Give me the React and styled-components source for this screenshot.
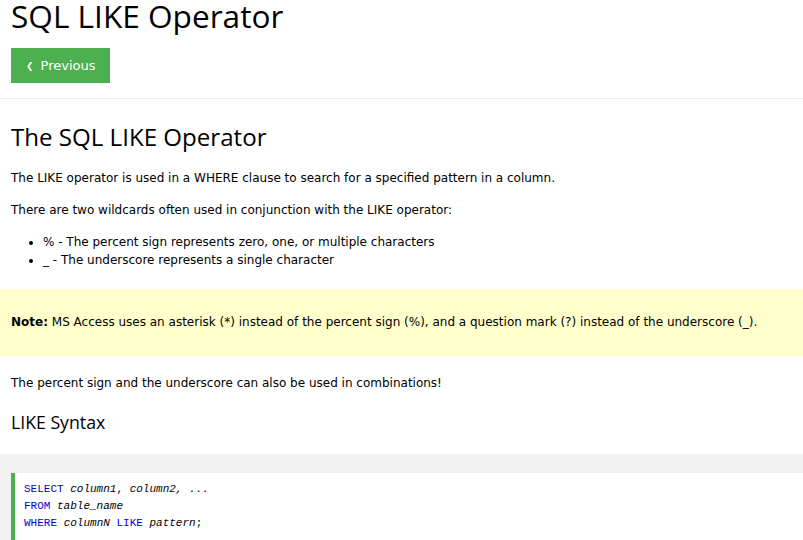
import styled, { createGlobalStyle } from "styled-components";

const GlobalStyle = createGlobalStyle`
  body {
    margin: 0;
    background: #fff;
    color: #000;
    font-family: Verdana, "DejaVu Sans", sans-serif;
    font-size: 12px;
    line-height: 18px;
  }
`;

const Page = styled.div`
  width: 803px;
  overflow: hidden;
`;

const Section = styled.div`
  padding: 0 11px;
`;

const Title = styled.h1`
  margin: 0;
  font-family: "Open Sans", "Noto Sans", sans-serif;
  font-weight: 400;
  font-size: 31.6px;
  line-height: 32px;
`;

const PrevButton = styled.a`
  display: inline-flex;
  align-items: center;
  gap: 7px;
  height: 35px;
  margin-top: 16px;
  padding: 0 14px 0 15px;
  background: #4caf50;
  color: #fff;
  text-decoration: none;
  font-size: 13px;
  cursor: pointer;
`;

const Arrow = styled.span`
  font-weight: bold;
  font-size: 9px;
`;

const Rule = styled.hr`
  margin: 15px 0 0;
  border: 0;
  border-top: 1px solid #eee;
`;

const Heading = styled.h2`
  margin: ${({ $small }) => ($small ? "18px 0 0" : "22px 0 0")};
  font-family: "Open Sans", "Noto Sans", sans-serif;
  font-weight: 400;
  font-size: ${({ $small }) => ($small ? "17.7px" : "24.1px")};
  line-height: ${({ $small }) => ($small ? "24px" : "32px")};
`;

const Para = styled.p`
  margin: ${({ $top }) => $top ?? "14px"} 0 0;
`;

const List = styled.ul`
  margin: 14px 0 0;
  padding-left: 32px;
`;

const Note = styled.div`
  margin-top: 20px;
  padding: 24px 11px 25px;
  background: #ffffcc;
`;

const Example = styled.div`
  margin-top: 20px;
  padding: 19px 0 0 11px;
  background: #f1f1f1;
`;

const CodeBox = styled.div`
  background: #fff;
  border-left: 4px solid #4caf50;
  padding: 8px 0 12px 9px;
  font-family: "Liberation Mono", "DejaVu Sans Mono", monospace;
  font-size: 11px;
  line-height: 17px;
  white-space: pre;
`;

const Keyword = styled.span`
  color: mediumblue;
`;

const Arg = styled.span`
  font-style: italic;
`;

export default function App() {
  return (
    <Page>
      <GlobalStyle />
      <Section>
        <Title>SQL LIKE Operator</Title>
        <PrevButton>
          <Arrow>❮</Arrow>
          <span>Previous</span>
        </PrevButton>
      </Section>
      <Rule />
      <Section>
        <Heading>The SQL LIKE Operator</Heading>
        <Para $top="16px">
          The LIKE operator is used in a WHERE clause to search for a specified pattern in a column.
        </Para>
        <Para>There are two wildcards often used in conjunction with the LIKE operator:</Para>
        <List>
          <li>% - The percent sign represents zero, one, or multiple characters</li>
          <li>_ - The underscore represents a single character</li>
        </List>
      </Section>
      <Note>
        <strong>Note:</strong> MS Access uses an asterisk (*) instead of the percent sign (%), and a
        question mark (?) instead of the underscore (_).
      </Note>
      <Section>
        <Para $top="18px">The percent sign and the underscore can also be used in combinations!</Para>
        <Heading $small>LIKE Syntax</Heading>
      </Section>
      <Example>
        <CodeBox>
          <div>
            <Keyword>SELECT</Keyword> <Arg>column1</Arg>, <Arg>column2, ...</Arg>
          </div>
          <div>
            <Keyword>FROM</Keyword> <Arg>table_name</Arg>
          </div>
          <div>
            <Keyword>WHERE</Keyword> <Arg>columnN</Arg> <Keyword>LIKE</Keyword> <Arg>pattern</Arg>;
          </div>
        </CodeBox>
      </Example>
    </Page>
  );
}
